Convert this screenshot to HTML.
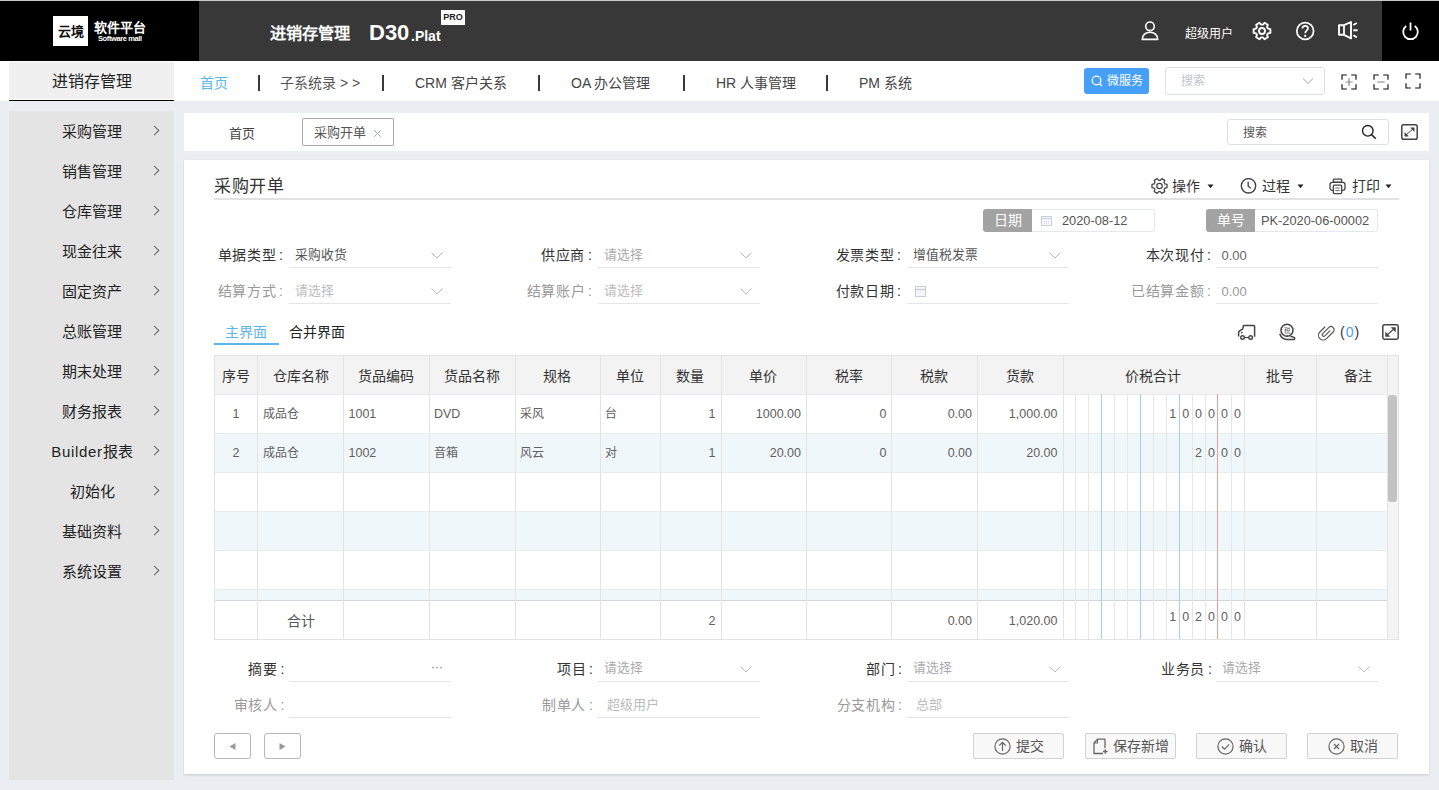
<!DOCTYPE html>
<html lang="zh-CN"><head><meta charset="utf-8">
<style>
*{margin:0;padding:0;box-sizing:border-box}
html,body{width:1439px;height:790px;overflow:hidden}
body{background:#eaedf1;font-family:"Liberation Sans",sans-serif;color:#333;position:relative}
.a{position:absolute;white-space:nowrap}
svg{display:block}
/* header */
#hd{position:absolute;left:0;top:0;width:1439px;height:61px;background:#383838;border-top:1px solid #c8c8c8}
#logo{position:absolute;left:0;top:0;width:199px;height:60px;background:#000}
#pwr{position:absolute;left:1382px;top:0;width:57px;height:60px;background:#000}
/* nav */
#nav{position:absolute;left:0;top:61px;width:1439px;height:40px;background:#fff}
.sep{position:absolute;top:14px;width:2px;height:16px;background:#3a3a3a}
/* sidebar */
#side{position:absolute;left:9px;top:111px;width:165px;height:669px;background:#e4e4e4}
.si{position:absolute;left:0;width:165px;height:20px;font-size:15px;color:#222;line-height:20px}
.si span{position:absolute;left:0;width:166px;text-align:center;top:1px}
.si i{position:absolute;left:142px;top:6px;width:7px;height:7px;border-top:1px solid #666;border-right:1px solid #666;transform:rotate(45deg)}
#tabs{position:absolute;left:184px;top:113px;width:1245px;height:38px;background:#fff}
#panel{position:absolute;left:184px;top:160px;width:1245px;height:614px;background:#fff;box-shadow:0 1px 2px rgba(0,0,0,.15)}
</style></head><body>
<div id="hd">
  <div id="logo">
    <div class="a" style="left:53px;top:15px;width:35px;height:30px;background:#fff;font-size:13px;font-weight:bold;color:#111;line-height:32px;text-align:center">云境</div>
    <div class="a" style="left:94px;top:18px;font-size:13px;font-weight:bold;color:#fff;line-height:17px">软件平台</div>
    <div class="a" style="left:98px;top:34px;font-size:7.5px;font-weight:bold;color:#fff;line-height:8px;letter-spacing:-0.4px">Software mall</div>
  </div>
  <div class="a" style="left:270px;top:22px;font-size:16.2px;font-weight:bold;color:#fff;line-height:20px">进销存管理</div>
  <div class="a" style="left:369px;top:20px;font-size:22px;font-weight:bold;color:#fff;line-height:24px">D30</div>
  <div class="a" style="left:411px;top:27px;font-size:14px;font-weight:bold;color:#fff;line-height:16px">.Plat</div>
  <div class="a" style="left:441px;top:9px;width:24px;height:15px;background:#fff;font-size:9px;font-weight:bold;color:#222;line-height:15px;text-align:center">PRO</div>
  <div class="a" style="left:1185px;top:25px;font-size:12px;color:#fff;line-height:16px">超级用户</div>
  
  <svg class="a" style="left:1141px;top:20px" width="18" height="20" viewBox="0 0 18 20"><circle cx="9" cy="5.3" r="4.3" fill="none" stroke="#fff" stroke-width="1.6"/><path d="M1.3 18.4C1.3 14 4.6 11.2 9 11.2S16.7 14 16.7 18.4Z" fill="none" stroke="#fff" stroke-width="1.6" stroke-linejoin="round"/></svg>
  <svg class="a" style="left:1252px;top:20px" width="20" height="20" viewBox="0 0 20 20"><path d="M15.93 12.40L18.38 11.93L18.38 8.07L15.93 7.60L15.04 6.06L15.87 3.71L12.51 1.78L10.89 3.66L9.11 3.66L7.49 1.78L4.13 3.71L4.96 6.06L4.07 7.60L1.62 8.07L1.62 11.93L4.07 12.40L4.96 13.94L4.13 16.29L7.49 18.22L9.11 16.34L10.89 16.34L12.51 18.22L15.87 16.29L15.04 13.94Z" fill="none" stroke="#fff" stroke-width="1.9" stroke-linejoin="round"/><circle cx="10" cy="10" r="3" fill="none" stroke="#fff" stroke-width="1.9"/></svg>
  <svg class="a" style="left:1295px;top:20px" width="20" height="20" viewBox="0 0 20 20"><circle cx="10.2" cy="10" r="8.4" fill="none" stroke="#fff" stroke-width="1.7"/><path d="M7.4 7.6C7.4 5.9 8.6 4.9 10.2 4.9S13 5.9 13 7.4C13 9.3 10.2 9.6 10.2 12.2" fill="none" stroke="#fff" stroke-width="1.7"/><circle cx="10.2" cy="14.9" r="1.1" fill="#fff"/></svg>
  <svg class="a" style="left:1336px;top:18px" width="24" height="22" viewBox="0 0 24 22"><path d="M3 6.2H8L15 3V19.4L8 15.8H3Z" fill="none" stroke="#fff" stroke-width="1.9" stroke-linejoin="round"/><path d="M8 6.2V15.8" stroke="#fff" stroke-width="1.8"/><path d="M17.3 6L20.8 4M17.3 11.2H21.6M17.3 16.2L20.8 18.4" stroke="#fff" stroke-width="1.9"/></svg>
  <div id="pwr"><svg class="a" style="left:19px;top:20px" width="19" height="20" viewBox="0 0 19 20"><path d="M5.2 5A7.3 7.3 0 1 0 13.8 5" fill="none" stroke="#fff" stroke-width="1.8"/><path d="M9.5 1.5V9.5" stroke="#fff" stroke-width="1.8"/></svg></div>
</div>
<div id="nav">
  <div class="a" style="left:9px;top:1px;width:165px;height:37px;background:#f0f0f0;font-size:16px;color:#222;line-height:40px;text-align:center">进销存管理</div>
  <div class="a" style="left:9px;top:39px;width:165px;height:1px;background:#000"></div>

  <div class="a" style="left:200px;top:14px;font-size:14px;color:#5cb6e9;line-height:16px">首页</div>
  <div class="sep" style="left:258px"></div>
  <div class="a" style="left:280px;top:14px;font-size:14px;color:#555;line-height:16px">子系统录 &gt; &gt;</div>
  <div class="sep" style="left:382px"></div>
  <div class="a" style="left:415px;top:14px;font-size:14px;color:#444;line-height:16px">CRM 客户关系</div>
  <div class="sep" style="left:538px"></div>
  <div class="a" style="left:571px;top:14px;font-size:14px;color:#444;line-height:16px">OA 办公管理</div>
  <div class="sep" style="left:683px"></div>
  <div class="a" style="left:716px;top:14px;font-size:14px;color:#444;line-height:16px">HR 人事管理</div>
  <div class="sep" style="left:826px"></div>
  <div class="a" style="left:859px;top:14px;font-size:14px;color:#444;line-height:16px">PM 系统</div>
  <div class="a" style="left:1084px;top:7px;width:65px;height:26px;background:#47a0f8;border-radius:3px;color:#fff;font-size:12px;line-height:26px">
    <svg class="a" style="left:7px;top:7px" width="12" height="12" viewBox="0 0 12 12"><circle cx="5.5" cy="5.5" r="4.3" fill="none" stroke="#fff" stroke-width="1.3"/><path d="M8.6 8.6L11 11" stroke="#fff" stroke-width="1.3"/></svg>
    <span class="a" style="left:23px;top:0">微服务</span>
  </div>
  <div class="a" style="left:1165px;top:6px;width:160px;height:28px;border:1px solid #dcdfe6;border-radius:3px;background:#fff">
    <span class="a" style="left:15px;top:6px;font-size:12px;color:#c0c4cc;line-height:14px">搜索</span>
    <svg class="a" style="left:136px;top:9px" width="12" height="8" viewBox="0 0 12 8"><path d="M1 1.5L6 6.5L11 1.5" fill="none" stroke="#c0c4cc" stroke-width="1.1"/></svg>
  </div>
  <svg class="a" style="left:1341px;top:13px" width="16" height="16" viewBox="0 0 16 16"><path d="M1 5.8V1H5.8M10.2 1H15V5.8M15 10.2V15H10.2M5.8 15H1V10.2" fill="none" stroke="#111" stroke-width="1.15"/><path d="M4.3 8H11.7" stroke="#aaa" stroke-width="1.2"/><path d="M8 4.3V11.7" stroke="#777" stroke-width="1.1"/></svg>
  <svg class="a" style="left:1373px;top:13px" width="16" height="16" viewBox="0 0 16 16"><path d="M1 5.8V1H5.8M10.2 1H15V5.8M15 10.2V15H10.2M5.8 15H1V10.2" fill="none" stroke="#111" stroke-width="1.15"/><path d="M4.3 8H11.7" stroke="#aaa" stroke-width="1.5"/></svg>
  <svg class="a" style="left:1405px;top:12px" width="16" height="16" viewBox="0 0 16 16"><path d="M1 5.8V1H5.8M10.2 1H15V5.8M15 10.2V15H10.2M5.8 15H1V10.2" fill="none" stroke="#111" stroke-width="1.15"/></svg>
</div>
<div id="side">
  <div class="si" style="top:10px"><span>采购管理</span><i></i></div>
  <div class="si" style="top:50px"><span>销售管理</span><i></i></div>
  <div class="si" style="top:90px"><span>仓库管理</span><i></i></div>
  <div class="si" style="top:130px"><span>现金往来</span><i></i></div>
  <div class="si" style="top:170px"><span>固定资产</span><i></i></div>
  <div class="si" style="top:210px"><span>总账管理</span><i></i></div>
  <div class="si" style="top:250px"><span>期末处理</span><i></i></div>
  <div class="si" style="top:290px"><span>财务报表</span><i></i></div>
  <div class="si" style="top:330px"><span><b style="font-weight:normal;letter-spacing:0.7px">Builder</b>报表</span><i></i></div>
  <div class="si" style="top:370px"><span>初始化</span><i></i></div>
  <div class="si" style="top:410px"><span>基础资料</span><i></i></div>
  <div class="si" style="top:450px"><span>系统设置</span><i></i></div>
</div>
<div id="tabs">
  <div class="a" style="left:45px;top:13px;font-size:13px;color:#444;line-height:16px">首页</div>
  <div class="a" style="left:118px;top:5px;width:92px;height:28px;border:1px solid #a8a8a8;border-radius:2px;font-size:13px;color:#555;line-height:26px">
    <span class="a" style="left:11px;top:1px">采购开单</span>
    <svg class="a" style="left:70px;top:10px" width="9" height="9" viewBox="0 0 9 9"><path d="M1.2 1.2L7.8 7.8M7.8 1.2L1.2 7.8" stroke="#99aabb" stroke-width="1"/></svg>
  </div>
  <div class="a" style="left:1043px;top:6px;width:162px;height:26px;border:1px solid #dcdfe6;border-radius:3px;background:#fff">
    <span class="a" style="left:15px;top:6px;font-size:12px;color:#555;line-height:14px">搜索</span>
    <svg class="a" style="left:133px;top:4px" width="16" height="16" viewBox="0 0 16 16"><circle cx="6.8" cy="6.8" r="5.3" fill="none" stroke="#222" stroke-width="1.4"/><path d="M10.7 10.7L14.8 14.8" stroke="#222" stroke-width="1.6"/></svg>
  </div>
  <svg class="a" style="left:1217px;top:11px" width="17" height="16" viewBox="0 0 17 16"><rect x="0.8" y="0.8" width="15.4" height="14.4" rx="1.8" fill="none" stroke="#444" stroke-width="1.5"/><path d="M4.6 11.4L12.4 4.6" stroke="#444" stroke-width="1"/><path d="M9.6 3.8H13.2V7.4Z M3.8 8.6V12.2H7.4Z" fill="#444" stroke="#444" stroke-width="0.5" stroke-linejoin="round"/></svg>
</div>
<div id="panel"></div>
<!--PC-->
<div class="a" style="left:214px;top:177px;font-size:17px;color:#333;line-height:20px;letter-spacing:0.6px">采购开单</div>
<div class="a" style="left:214px;top:198px;width:1185px;height:2px;background:#e2e2e2"></div>
<svg class="a" style="left:1150px;top:177px" width="19" height="18" viewBox="0 0 20 20"><path d="M15.93 12.40L18.38 11.93L18.38 8.07L15.93 7.60L15.04 6.06L15.87 3.71L12.51 1.78L10.89 3.66L9.11 3.66L7.49 1.78L4.13 3.71L4.96 6.06L4.07 7.60L1.62 8.07L1.62 11.93L4.07 12.40L4.96 13.94L4.13 16.29L7.49 18.22L9.11 16.34L10.89 16.34L12.51 18.22L15.87 16.29L15.04 13.94Z" fill="none" stroke="#444" stroke-width="1.4" stroke-linejoin="round"/><circle cx="10" cy="10" r="3" fill="none" stroke="#444" stroke-width="1.4"/></svg>
<div class="a" style="left:1172px;top:178px;font-size:14px;color:#333;line-height:16px">操作</div>
<svg class="a" style="left:1240px;top:178px" width="17" height="16" viewBox="0 0 17 16"><circle cx="8.5" cy="7.8" r="7.2" fill="none" stroke="#444" stroke-width="1.4"/><path d="M8.2 3.8V8.2L11 10.2" fill="none" stroke="#444" stroke-width="1.4"/></svg>
<div class="a" style="left:1262px;top:178px;font-size:14px;color:#333;line-height:16px">过程</div>
<svg class="a" style="left:1329px;top:178px" width="17" height="17" viewBox="0 0 17 17"><rect x="4.3" y="1.2" width="8.4" height="3" rx="0.8" fill="none" stroke="#444" stroke-width="1.3"/><rect x="1" y="4.3" width="15" height="8" rx="2.2" fill="none" stroke="#444" stroke-width="1.3"/><rect x="4.3" y="7.2" width="8.4" height="8.4" rx="1" fill="#fff" stroke="#444" stroke-width="1.3"/><path d="M6.3 10H10.7M6.3 12.6H10.7" stroke="#666" stroke-width="1"/></svg>
<div class="a" style="left:1352px;top:178px;font-size:14px;color:#333;line-height:16px">打印</div>
<svg class="a" style="left:1207px;top:184px" width="7" height="5" viewBox="0 0 7 5"><path d="M0.5 0.5H6.5L3.5 4.2Z" fill="#222"/></svg>
<svg class="a" style="left:1297px;top:184px" width="7" height="5" viewBox="0 0 7 5"><path d="M0.5 0.5H6.5L3.5 4.2Z" fill="#222"/></svg>
<svg class="a" style="left:1385px;top:184px" width="7" height="5" viewBox="0 0 7 5"><path d="M0.5 0.5H6.5L3.5 4.2Z" fill="#222"/></svg>
<div class="a" style="left:983px;top:209px;width:49px;height:23px;background:#a3a3a3;border-radius:3px 0 0 3px;color:#fff;font-size:14px;line-height:23px;text-align:center">日期</div>
<div class="a" style="left:1032px;top:209px;width:123px;height:23px;border:1px solid #e4e7ed;border-left:none;border-radius:0 3px 3px 0;background:#fff"></div>
<svg class="a" style="left:1041px;top:216px" width="11" height="10" viewBox="0 0 11 10"><rect x="0.5" y="0.5" width="10" height="9" fill="#f7f9fc" stroke="#c8cde0" stroke-width="1"/><path d="M0.5 2.5H10.5" stroke="#c8d6e6" stroke-width="1.2"/><path d="M3 5.5H4M5 5.5H6M7 5.5H8M3 7.3H4M5 7.3H6M7 7.3H8" stroke="#d0d4dc" stroke-width="0.9"/></svg>
<div class="a" style="left:1062px;top:213px;font-size:12.8px;color:#555;line-height:16px">2020-08-12</div>
<div class="a" style="left:1206px;top:209px;width:49px;height:23px;background:#a3a3a3;border-radius:3px 0 0 3px;color:#fff;font-size:14px;line-height:23px;text-align:center">单号</div>
<div class="a" style="left:1255px;top:209px;width:123px;height:23px;border:1px solid #e4e7ed;border-left:none;border-radius:0 3px 3px 0;background:#fff"></div>
<div class="a" style="left:1261px;top:213px;font-size:12.8px;color:#555;line-height:16px">PK-2020-06-00002</div>
<div class="a" style="left:163px;width:120px;top:246px;text-align:right;font-size:14px;color:#333;line-height:18px;letter-spacing:0.6px">单据类型<span style="margin-left:3px;letter-spacing:0">:</span></div>
<div class="a" style="left:289px;top:267px;width:162px;height:1px;background:#e3e5ea"></div>
<div class="a" style="left:294.5px;top:248px;font-size:12.8px;color:#555;line-height:14px">采购收货</div>
<svg class="a" style="left:431px;top:252px" width="12" height="7" viewBox="0 0 12 7"><path d="M0.5 0.5L6 6L11.5 0.5" fill="none" stroke="#b8bcc4" stroke-width="1"/></svg>
<div class="a" style="left:472px;width:120px;top:246px;text-align:right;font-size:14px;color:#333;line-height:18px;letter-spacing:0.6px">供应商<span style="margin-left:3px;letter-spacing:0">:</span></div>
<div class="a" style="left:598px;top:267px;width:162px;height:1px;background:#e3e5ea"></div>
<div class="a" style="left:603.5px;top:248px;font-size:12.8px;color:#aaa;line-height:14px">请选择</div>
<svg class="a" style="left:740px;top:252px" width="12" height="7" viewBox="0 0 12 7"><path d="M0.5 0.5L6 6L11.5 0.5" fill="none" stroke="#b8bcc4" stroke-width="1"/></svg>
<div class="a" style="left:781px;width:120px;top:246px;text-align:right;font-size:14px;color:#333;line-height:18px;letter-spacing:0.6px">发票类型<span style="margin-left:3px;letter-spacing:0">:</span></div>
<div class="a" style="left:907px;top:267px;width:162px;height:1px;background:#e3e5ea"></div>
<div class="a" style="left:912.5px;top:248px;font-size:12.8px;color:#555;line-height:14px">增值税发票</div>
<svg class="a" style="left:1049px;top:252px" width="12" height="7" viewBox="0 0 12 7"><path d="M0.5 0.5L6 6L11.5 0.5" fill="none" stroke="#b8bcc4" stroke-width="1"/></svg>
<div class="a" style="left:1091px;width:120px;top:246px;text-align:right;font-size:14px;color:#333;line-height:18px;letter-spacing:0.6px">本次现付<span style="margin-left:3px;letter-spacing:0">:</span></div>
<div class="a" style="left:1216px;top:267px;width:162px;height:1px;background:#e3e5ea"></div>
<div class="a" style="left:1221.5px;top:249px;font-size:13px;color:#666;line-height:14px">0.00</div>
<div class="a" style="left:163px;width:120px;top:282px;text-align:right;font-size:14px;color:#999;line-height:18px;letter-spacing:0.6px">结算方式<span style="margin-left:3px;letter-spacing:0">:</span></div>
<div class="a" style="left:289px;top:303px;width:162px;height:1px;background:#e3e5ea"></div>
<div class="a" style="left:294.5px;top:284px;font-size:12.8px;color:#bbb;line-height:14px">请选择</div>
<svg class="a" style="left:431px;top:288px" width="12" height="7" viewBox="0 0 12 7"><path d="M0.5 0.5L6 6L11.5 0.5" fill="none" stroke="#b8bcc4" stroke-width="1"/></svg>
<div class="a" style="left:472px;width:120px;top:282px;text-align:right;font-size:14px;color:#999;line-height:18px;letter-spacing:0.6px">结算账户<span style="margin-left:3px;letter-spacing:0">:</span></div>
<div class="a" style="left:598px;top:303px;width:162px;height:1px;background:#e3e5ea"></div>
<div class="a" style="left:603.5px;top:284px;font-size:12.8px;color:#bbb;line-height:14px">请选择</div>
<svg class="a" style="left:740px;top:288px" width="12" height="7" viewBox="0 0 12 7"><path d="M0.5 0.5L6 6L11.5 0.5" fill="none" stroke="#b8bcc4" stroke-width="1"/></svg>
<div class="a" style="left:781px;width:120px;top:282px;text-align:right;font-size:14px;color:#333;line-height:18px;letter-spacing:0.6px">付款日期<span style="margin-left:3px;letter-spacing:0">:</span></div>
<div class="a" style="left:907px;top:303px;width:162px;height:1px;background:#e3e5ea"></div>
<svg class="a" style="left:915px;top:286px" width="11" height="11" viewBox="0 0 11 11"><rect x="0.5" y="0.5" width="10" height="10" fill="#f4f6f9" stroke="#c8cdd6" stroke-width="1"/><path d="M0.5 3.5H10.5" stroke="#c8cdd6" stroke-width="1.2"/></svg>
<div class="a" style="left:1091px;width:120px;top:282px;text-align:right;font-size:14px;color:#999;line-height:18px;letter-spacing:0.6px">已结算金额<span style="margin-left:3px;letter-spacing:0">:</span></div>
<div class="a" style="left:1216px;top:303px;width:162px;height:1px;background:#e3e5ea"></div>
<div class="a" style="left:1221.5px;top:285px;font-size:13px;color:#999;line-height:14px">0.00</div>
<div class="a" style="left:225px;top:324px;font-size:14px;color:#5cb6e9;line-height:16px">主界面</div>
<div class="a" style="left:289px;top:324px;font-size:14px;color:#222;line-height:16px">合并界面</div>
<div class="a" style="left:214px;top:343px;width:65px;height:2px;background:#5cb6e9"></div>
<svg class="a" style="left:1236px;top:323px" width="20" height="18" viewBox="0 0 20 18"><path d="M7.1 5.6V3.4Q7.1 2.4 8.1 2.4H17.6Q18.6 2.4 18.6 3.4V13.7" fill="none" stroke="#444" stroke-width="1.5" stroke-linejoin="round"/><path d="M7.1 5.6L3.4 8.2Q2.6 8.8 2.6 9.7V13.6" fill="none" stroke="#444" stroke-width="1.5" stroke-linejoin="round"/><circle cx="6.5" cy="14.5" r="1.8" fill="none" stroke="#444" stroke-width="1.4"/><circle cx="14.6" cy="14.5" r="1.8" fill="none" stroke="#444" stroke-width="1.4"/><path d="M8.3 14.5H12.8" stroke="#444" stroke-width="1.2"/><path d="M5 10.3L6.6 9.2" stroke="#444" stroke-width="1.1"/></svg>
<svg class="a" style="left:1278px;top:323px" width="18" height="18" viewBox="0 0 18 18"><circle cx="9" cy="7.3" r="6" fill="none" stroke="#444" stroke-width="1.5"/><path d="M1.8 10.8C2.8 14.2 5.6 16.4 9 16.4H16.2C16.8 16.4 16.9 14.6 16.2 14.4L12.3 13.2" fill="none" stroke="#444" stroke-width="1.5" stroke-linejoin="round"/><path d="M8.3 13.6L9.8 12.4" stroke="#444" stroke-width="1.2"/><text x="9" y="9.8" font-size="6.5" text-anchor="middle" fill="#555">税</text></svg>
<svg class="a" style="left:1318px;top:323px" width="17" height="18" viewBox="0 0 17 18"><g transform="translate(8.5 9) rotate(45) scale(0.78)"><path d="M2 -4V5A2 2 0 0 1 -2 5V-6A4 4 0 0 1 6 -6V6A6 6 0 0 1 -6 6V-3" fill="none" stroke="#555" stroke-width="1.5" stroke-linecap="round"/></g></svg>
<div class="a" style="left:1340px;top:324px;font-size:14px;color:#333;line-height:17px;letter-spacing:1px">(<span style="color:#47a0f8">0</span>)</div>
<svg class="a" style="left:1382px;top:324px" width="17" height="16" viewBox="0 0 17 16"><rect x="0.8" y="0.8" width="15.4" height="14.4" rx="1.6" fill="none" stroke="#444" stroke-width="1.5"/><path d="M4.5 11.5L12.5 4.5" stroke="#444" stroke-width="1.1"/><path d="M9.3 3.6H13.4V7.7Z M3.6 8.3V12.4H7.7Z" fill="#444" stroke="#444" stroke-width="0.6" stroke-linejoin="round"/></svg>
<div class="a" style="left:214px;top:355px;width:1185px;height:285px;border:1px solid #e3e3e3;background:#fff;overflow:hidden">
<div class="a" style="left:0;top:0;width:1172px;height:38px;background:#f3f3f3"></div>
<div class="a" style="left:1172px;top:0;width:12px;height:38px;background:#f3f3f3"></div>
<div class="a" style="left:0;top:38px;width:1172px;height:39px;background:#fff;border-top:1px solid #e9ebee"></div>
<div class="a" style="left:0;top:77px;width:1172px;height:39px;background:#f0f7fb;border-top:1px solid #e9ebee"></div>
<div class="a" style="left:0;top:116px;width:1172px;height:39px;background:#fff;border-top:1px solid #e9ebee"></div>
<div class="a" style="left:0;top:155px;width:1172px;height:39px;background:#f0f7fb;border-top:1px solid #e9ebee"></div>
<div class="a" style="left:0;top:194px;width:1172px;height:39px;background:#fff;border-top:1px solid #e9ebee"></div>
<div class="a" style="left:0;top:233px;width:1172px;height:11px;background:#f0f7fb;border-top:1px solid #e9ebee"></div>
<div class="a" style="left:0;top:244px;width:1172px;height:40px;background:#fff;border-top:1px solid #d3d6db"></div>
<div class="a" style="left:42px;top:0;width:1px;height:285px;background:#e3e3e3"></div>
<div class="a" style="left:128px;top:0;width:1px;height:285px;background:#e3e3e3"></div>
<div class="a" style="left:214px;top:0;width:1px;height:285px;background:#e3e3e3"></div>
<div class="a" style="left:300px;top:0;width:1px;height:285px;background:#e3e3e3"></div>
<div class="a" style="left:385px;top:0;width:1px;height:285px;background:#e3e3e3"></div>
<div class="a" style="left:445px;top:0;width:1px;height:285px;background:#e3e3e3"></div>
<div class="a" style="left:506px;top:0;width:1px;height:285px;background:#e3e3e3"></div>
<div class="a" style="left:591px;top:0;width:1px;height:285px;background:#e3e3e3"></div>
<div class="a" style="left:676px;top:0;width:1px;height:285px;background:#e3e3e3"></div>
<div class="a" style="left:762px;top:0;width:1px;height:285px;background:#e3e3e3"></div>
<div class="a" style="left:848px;top:0;width:1px;height:285px;background:#e3e3e3"></div>
<div class="a" style="left:1029px;top:0;width:1px;height:285px;background:#e3e3e3"></div>
<div class="a" style="left:1101px;top:0;width:1px;height:285px;background:#e3e3e3"></div>
<div class="a" style="left:1172px;top:0;width:1px;height:285px;background:#e3e3e3"></div>
<div class="a" style="left:860px;top:38px;width:1px;height:246px;background:#e6e6e6"></div>
<div class="a" style="left:873px;top:38px;width:1px;height:246px;background:#e6e6e6"></div>
<div class="a" style="left:886px;top:38px;width:1px;height:246px;background:#9fd2f0"></div>
<div class="a" style="left:899px;top:38px;width:1px;height:246px;background:#e6e6e6"></div>
<div class="a" style="left:912px;top:38px;width:1px;height:246px;background:#e6e6e6"></div>
<div class="a" style="left:925px;top:38px;width:1px;height:246px;background:#9fd2f0"></div>
<div class="a" style="left:938px;top:38px;width:1px;height:246px;background:#e6e6e6"></div>
<div class="a" style="left:951px;top:38px;width:1px;height:246px;background:#e6e6e6"></div>
<div class="a" style="left:964px;top:38px;width:1px;height:246px;background:#9fd2f0"></div>
<div class="a" style="left:977px;top:38px;width:1px;height:246px;background:#e6e6e6"></div>
<div class="a" style="left:990px;top:38px;width:1px;height:246px;background:#e6e6e6"></div>
<div class="a" style="left:1002px;top:38px;width:1px;height:246px;background:#f09a9a"></div>
<div class="a" style="left:1016px;top:38px;width:1px;height:246px;background:#e6e6e6"></div>
<div class="a" style="left:1172px;top:38px;width:12px;height:246px;background:#f4f4f4;border-left:1px solid #e3e3e3"></div>
<div class="a" style="left:1173px;top:39px;width:9px;height:107px;background:#c3c3c3;border-radius:3px"></div>
</div>
<div class="a" style="left:214.5px;width:43.0px;top:368px;text-align:center;font-size:14px;color:#333;line-height:16px">序号</div>
<div class="a" style="left:257.5px;width:86.0px;top:368px;text-align:center;font-size:14px;color:#333;line-height:16px">仓库名称</div>
<div class="a" style="left:343.5px;width:85.5px;top:368px;text-align:center;font-size:14px;color:#333;line-height:16px">货品编码</div>
<div class="a" style="left:429px;width:85.5px;top:368px;text-align:center;font-size:14px;color:#333;line-height:16px">货品名称</div>
<div class="a" style="left:514.5px;width:85.5px;top:368px;text-align:center;font-size:14px;color:#333;line-height:16px">规格</div>
<div class="a" style="left:600px;width:60px;top:368px;text-align:center;font-size:14px;color:#333;line-height:16px">单位</div>
<div class="a" style="left:660px;width:60.5px;top:368px;text-align:center;font-size:14px;color:#333;line-height:16px">数量</div>
<div class="a" style="left:720.5px;width:85.5px;top:368px;text-align:center;font-size:14px;color:#333;line-height:16px">单价</div>
<div class="a" style="left:806px;width:85.5px;top:368px;text-align:center;font-size:14px;color:#333;line-height:16px">税率</div>
<div class="a" style="left:891.5px;width:85.5px;top:368px;text-align:center;font-size:14px;color:#333;line-height:16px">税款</div>
<div class="a" style="left:977px;width:85.5px;top:368px;text-align:center;font-size:14px;color:#333;line-height:16px">货款</div>
<div class="a" style="left:1062.5px;width:181.5px;top:368px;text-align:center;font-size:14px;color:#333;line-height:16px">价税合计</div>
<div class="a" style="left:1244px;width:72px;top:368px;text-align:center;font-size:14px;color:#333;line-height:16px">批号</div>
<div class="a" style="left:1316px;width:84px;top:368px;text-align:center;font-size:14px;color:#333;line-height:16px">备注</div>
<div class="a" style="left:214.5px;width:43.0px;top:407px;text-align:center;font-size:12.5px;color:#606060;line-height:14px">1</div>
<div class="a" style="left:262.5px;top:407px;font-size:12px;color:#606060;line-height:14px">成品仓</div>
<div class="a" style="left:348.5px;top:407px;font-size:12.5px;color:#606060;line-height:14px">1001</div>
<div class="a" style="left:434px;top:407px;font-size:12.5px;color:#606060;line-height:14px">DVD</div>
<div class="a" style="left:519.5px;top:407px;font-size:12px;color:#606060;line-height:14px">采风</div>
<div class="a" style="left:605px;top:407px;font-size:12px;color:#606060;line-height:14px">台</div>
<div class="a" style="left:660px;width:55.5px;top:407px;text-align:right;font-size:12.5px;color:#606060;line-height:14px">1</div>
<div class="a" style="left:720.5px;width:80.5px;top:407px;text-align:right;font-size:12.5px;color:#606060;line-height:14px">1000.00</div>
<div class="a" style="left:806px;width:80.5px;top:407px;text-align:right;font-size:12.5px;color:#606060;line-height:14px">0</div>
<div class="a" style="left:891.5px;width:80.5px;top:407px;text-align:right;font-size:12.5px;color:#606060;line-height:14px">0.00</div>
<div class="a" style="left:977px;width:80.5px;top:407px;text-align:right;font-size:12.5px;color:#606060;line-height:14px">1,000.00</div>
<div class="a" style="left:1231.0px;width:12.96px;top:407px;text-align:center;font-size:12.5px;color:#606060;line-height:14px">0</div>
<div class="a" style="left:1218.1px;width:12.96px;top:407px;text-align:center;font-size:12.5px;color:#606060;line-height:14px">0</div>
<div class="a" style="left:1205.1px;width:12.96px;top:407px;text-align:center;font-size:12.5px;color:#606060;line-height:14px">0</div>
<div class="a" style="left:1192.1px;width:12.96px;top:407px;text-align:center;font-size:12.5px;color:#606060;line-height:14px">0</div>
<div class="a" style="left:1179.2px;width:12.96px;top:407px;text-align:center;font-size:12.5px;color:#606060;line-height:14px">0</div>
<div class="a" style="left:1166.2px;width:12.96px;top:407px;text-align:center;font-size:12.5px;color:#606060;line-height:14px">1</div>
<div class="a" style="left:214.5px;width:43.0px;top:446px;text-align:center;font-size:12.5px;color:#606060;line-height:14px">2</div>
<div class="a" style="left:262.5px;top:446px;font-size:12px;color:#606060;line-height:14px">成品仓</div>
<div class="a" style="left:348.5px;top:446px;font-size:12.5px;color:#606060;line-height:14px">1002</div>
<div class="a" style="left:434px;top:446px;font-size:12px;color:#606060;line-height:14px">音箱</div>
<div class="a" style="left:519.5px;top:446px;font-size:12px;color:#606060;line-height:14px">风云</div>
<div class="a" style="left:605px;top:446px;font-size:12px;color:#606060;line-height:14px">对</div>
<div class="a" style="left:660px;width:55.5px;top:446px;text-align:right;font-size:12.5px;color:#606060;line-height:14px">1</div>
<div class="a" style="left:720.5px;width:80.5px;top:446px;text-align:right;font-size:12.5px;color:#606060;line-height:14px">20.00</div>
<div class="a" style="left:806px;width:80.5px;top:446px;text-align:right;font-size:12.5px;color:#606060;line-height:14px">0</div>
<div class="a" style="left:891.5px;width:80.5px;top:446px;text-align:right;font-size:12.5px;color:#606060;line-height:14px">0.00</div>
<div class="a" style="left:977px;width:80.5px;top:446px;text-align:right;font-size:12.5px;color:#606060;line-height:14px">20.00</div>
<div class="a" style="left:1231.0px;width:12.96px;top:446px;text-align:center;font-size:12.5px;color:#606060;line-height:14px">0</div>
<div class="a" style="left:1218.1px;width:12.96px;top:446px;text-align:center;font-size:12.5px;color:#606060;line-height:14px">0</div>
<div class="a" style="left:1205.1px;width:12.96px;top:446px;text-align:center;font-size:12.5px;color:#606060;line-height:14px">0</div>
<div class="a" style="left:1192.1px;width:12.96px;top:446px;text-align:center;font-size:12.5px;color:#606060;line-height:14px">2</div>
<div class="a" style="left:257.5px;width:86.0px;top:613px;text-align:center;font-size:14px;color:#555;line-height:16px">合计</div>
<div class="a" style="left:660px;width:55.5px;top:614px;text-align:right;font-size:12.5px;color:#606060;line-height:14px">2</div>
<div class="a" style="left:891.5px;width:80.5px;top:614px;text-align:right;font-size:12.5px;color:#606060;line-height:14px">0.00</div>
<div class="a" style="left:977px;width:80.5px;top:614px;text-align:right;font-size:12.5px;color:#606060;line-height:14px">1,020.00</div>
<div class="a" style="left:1231.0px;width:12.96px;top:610px;text-align:center;font-size:12.5px;color:#606060;line-height:14px">0</div>
<div class="a" style="left:1218.1px;width:12.96px;top:610px;text-align:center;font-size:12.5px;color:#606060;line-height:14px">0</div>
<div class="a" style="left:1205.1px;width:12.96px;top:610px;text-align:center;font-size:12.5px;color:#606060;line-height:14px">0</div>
<div class="a" style="left:1192.1px;width:12.96px;top:610px;text-align:center;font-size:12.5px;color:#606060;line-height:14px">2</div>
<div class="a" style="left:1179.2px;width:12.96px;top:610px;text-align:center;font-size:12.5px;color:#606060;line-height:14px">0</div>
<div class="a" style="left:1166.2px;width:12.96px;top:610px;text-align:center;font-size:12.5px;color:#606060;line-height:14px">1</div>
<div class="a" style="left:164.5px;width:120px;top:660px;text-align:right;font-size:14px;color:#333;line-height:18px;letter-spacing:0.6px">摘要<span style="margin-left:3px;letter-spacing:0">:</span></div>
<div class="a" style="left:289px;top:681px;width:162px;height:1px;background:#e3e5ea"></div>
<div class="a" style="left:431px;top:660px;font-size:12px;color:#777;line-height:14px">···</div>
<div class="a" style="left:473px;width:120px;top:660px;text-align:right;font-size:14px;color:#333;line-height:18px;letter-spacing:0.6px">项目<span style="margin-left:3px;letter-spacing:0">:</span></div>
<div class="a" style="left:598px;top:681px;width:162px;height:1px;background:#e3e5ea"></div>
<div class="a" style="left:603.5px;top:661px;font-size:12.8px;color:#aaa;line-height:14px">请选择</div>
<svg class="a" style="left:740px;top:666px" width="12" height="7" viewBox="0 0 12 7"><path d="M0.5 0.5L6 6L11.5 0.5" fill="none" stroke="#b8bcc4" stroke-width="1"/></svg>
<div class="a" style="left:782px;width:120px;top:660px;text-align:right;font-size:14px;color:#333;line-height:18px;letter-spacing:0.6px">部门<span style="margin-left:3px;letter-spacing:0">:</span></div>
<div class="a" style="left:907px;top:681px;width:162px;height:1px;background:#e3e5ea"></div>
<div class="a" style="left:912.5px;top:661px;font-size:12.8px;color:#aaa;line-height:14px">请选择</div>
<svg class="a" style="left:1049px;top:666px" width="12" height="7" viewBox="0 0 12 7"><path d="M0.5 0.5L6 6L11.5 0.5" fill="none" stroke="#b8bcc4" stroke-width="1"/></svg>
<div class="a" style="left:1092px;width:120px;top:660px;text-align:right;font-size:14px;color:#333;line-height:18px;letter-spacing:0.6px">业务员<span style="margin-left:3px;letter-spacing:0">:</span></div>
<div class="a" style="left:1216px;top:681px;width:162px;height:1px;background:#e3e5ea"></div>
<div class="a" style="left:1221.5px;top:661px;font-size:12.8px;color:#aaa;line-height:14px">请选择</div>
<svg class="a" style="left:1358px;top:666px" width="12" height="7" viewBox="0 0 12 7"><path d="M0.5 0.5L6 6L11.5 0.5" fill="none" stroke="#b8bcc4" stroke-width="1"/></svg>
<div class="a" style="left:164.5px;width:120px;top:696px;text-align:right;font-size:14px;color:#999;line-height:18px;letter-spacing:0.6px">审核人<span style="margin-left:3px;letter-spacing:0">:</span></div>
<div class="a" style="left:289px;top:717px;width:162px;height:1px;background:#e3e5ea"></div>
<div class="a" style="left:473px;width:120px;top:696px;text-align:right;font-size:14px;color:#999;line-height:18px;letter-spacing:0.6px">制单人<span style="margin-left:3px;letter-spacing:0">:</span></div>
<div class="a" style="left:598px;top:717px;width:162px;height:1px;background:#e3e5ea"></div>
<div class="a" style="left:606.5px;top:698px;font-size:13px;color:#bbb;line-height:14px">超级用户</div>
<div class="a" style="left:782px;width:120px;top:696px;text-align:right;font-size:14px;color:#999;line-height:18px;letter-spacing:0.6px">分支机构<span style="margin-left:3px;letter-spacing:0">:</span></div>
<div class="a" style="left:907px;top:717px;width:162px;height:1px;background:#e3e5ea"></div>
<div class="a" style="left:915.5px;top:698px;font-size:13px;color:#bbb;line-height:14px">总部</div>
<div class="a" style="left:214px;top:733px;width:37px;height:26px;border:1px solid #b8b8b8;border-radius:3px;background:#fff"><svg class="a" style="left:14px;top:9px" width="7" height="7" viewBox="0 0 7 7"><path d="M0.5 3.5L6.5 0V7Z" fill="#999"/></svg></div>
<div class="a" style="left:264px;top:733px;width:37px;height:26px;border:1px solid #b8b8b8;border-radius:3px;background:#fff"><svg class="a" style="left:14px;top:9px" width="7" height="7" viewBox="0 0 7 7"><path d="M6.5 3.5L0.5 0V7Z" fill="#999"/></svg></div>
<div class="a" style="left:973px;top:733px;width:91px;height:26px;border:1px solid #d2d2d2;border-radius:2px;background:#f8f8f8"><svg class="a" style="left:20px;top:4px" width="17" height="17" viewBox="0 0 17 17"><circle cx="8.5" cy="8.5" r="7.6" fill="none" stroke="#666" stroke-width="1.2"/><path d="M8.5 13V4.5M5.3 7.5L8.5 4.3L11.7 7.5" fill="none" stroke="#666" stroke-width="1.2"/></svg><span class="a" style="left:42px;top:4px;font-size:14px;color:#555;line-height:16px">提交</span></div>
<div class="a" style="left:1085px;top:733px;width:91px;height:26px;border:1px solid #d2d2d2;border-radius:2px;background:#f8f8f8"><svg class="a" style="left:6px;top:4px" width="16" height="17" viewBox="0 0 16 17"><path d="M11 15.5H2V5L5.5 1.2H13V10" fill="none" stroke="#666" stroke-width="1.3" stroke-linejoin="round"/><path d="M2 5H5.5V1.2" fill="none" stroke="#666" stroke-width="1.1"/><path d="M11 13.5H15.5M13.2 11.2V15.8" stroke="#666" stroke-width="1.3"/></svg><span class="a" style="left:27px;top:4px;font-size:14px;color:#555;line-height:16px">保存新增</span></div>
<div class="a" style="left:1196px;top:733px;width:91px;height:26px;border:1px solid #d2d2d2;border-radius:2px;background:#f8f8f8"><svg class="a" style="left:20px;top:4px" width="17" height="17" viewBox="0 0 17 17"><circle cx="8.5" cy="8.5" r="7.6" fill="none" stroke="#666" stroke-width="1.2"/><path d="M4.8 8.5L7.5 11.2L12.2 6.3" fill="none" stroke="#666" stroke-width="1.2"/></svg><span class="a" style="left:42px;top:4px;font-size:14px;color:#555;line-height:16px">确认</span></div>
<div class="a" style="left:1307px;top:733px;width:91px;height:26px;border:1px solid #d2d2d2;border-radius:2px;background:#f8f8f8"><svg class="a" style="left:20px;top:4px" width="17" height="17" viewBox="0 0 17 17"><circle cx="8.5" cy="8.5" r="7.6" fill="none" stroke="#666" stroke-width="1.2"/><path d="M6 6L11 11M11 6L6 11" fill="none" stroke="#666" stroke-width="1.2"/></svg><span class="a" style="left:42px;top:4px;font-size:14px;color:#555;line-height:16px">取消</span></div>
<!--/PC-->
</body></html>
